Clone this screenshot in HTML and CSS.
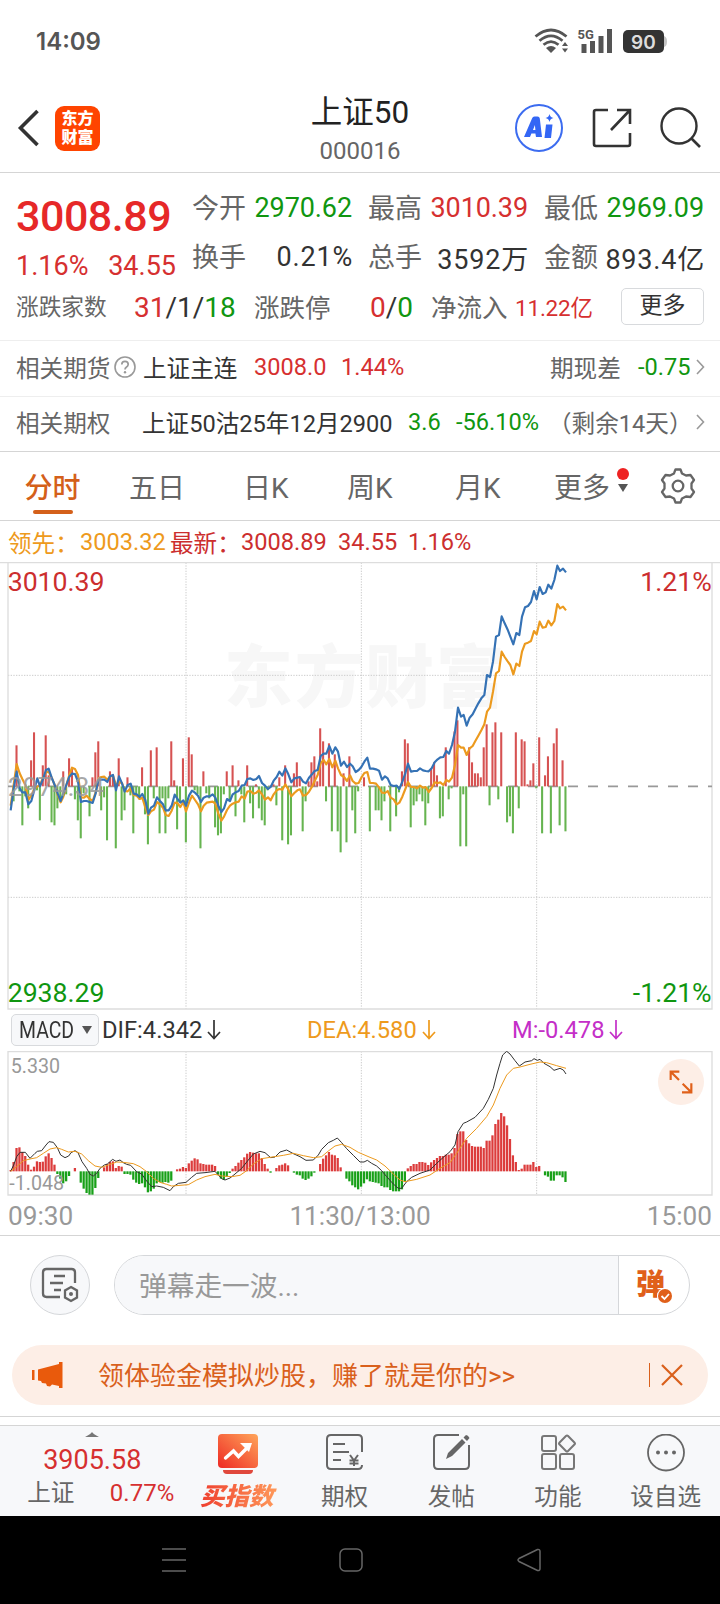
FILE: index.html
```
<!DOCTYPE html>
<html lang="zh-CN">
<head>
    <meta charset="UTF-8">
    <meta name="viewport" content="width=device-width, initial-scale=1.0">
    <title>上证50 000016</title>
    <link rel="stylesheet" href="styles.css">
</head>
<body>
    <div class="status">
        <span class="clock">14:09</span>
        <svg class="status-icons" width="140" height="32" viewBox="0 0 140 32">
            <g fill="none" stroke="#555" stroke-width="2.8">
                <path d="M3.5 12.5Q19 -.5 34.500 12.500"/>
                <path d="M7.500 16.800Q19 7 30.500 16.800"/>
                <path d="M11.500 20.800Q19 14.500 26.500 20.800"/>
            </g>
            <path d="M14 24q5-4 10 0l-5 5z" fill="#555"/>
            <path d="M30 22l3-4 3 4zM30 24.500l3 4 3-4z" fill="#555"/>
            <text x="45.500" y="15" class="net">5G</text>
            <path d="M49.500 20h5v9h-5zM58 17h5v12h-5zM66.500 12h5v17h-5zM75 5h5v24h-5z" fill="#555"/>
            <path d="M131 12q4 0 4 5.500t-4 5.500z" fill="#c4c4c4"/>
            <rect x="91" y="6" width="41" height="23" rx="5" fill="#333"/>
            <text x="99" y="24.500" class="battery">90</text>
        </svg>
    </div>

    <div class="nav">
        <svg class="back" width="24" height="40" viewBox="0 0 24 40"><path d="M22.500 3L5.500 20l17 17" fill="none" stroke="#333" stroke-width="3.600"/></svg>
        <div class="logo">东方<br>财富</div>
        <div class="heading">
            <div class="name">上证50</div>
            <div class="code">000016</div>
        </div>
        <div class="nav-icons">
            <svg width="48" height="48" viewBox="0 0 48 48">
                <circle cx="24" cy="24" r="23" fill="none" stroke="#3c6cf0" stroke-width="2"/>
                <path fill="#3366f5" fill-rule="evenodd" d="M9 33L17 14.500q.700-2 2.500-2h3q2 0 2.300 2L27 33h-6l-.600-3.500h-4L15 33zM18 26h2.400l-.500-5zM31 20.500h6.500l-1.500 13.500h-6.500zM34.500 10q.700 3.500 4 4-3.300.700-4 4-.700-3.300-4-4 3.300-.500 4-4z"/>
            </svg>
            <svg width="40" height="40" viewBox="0 0 40 40"><path d="M16 2H4Q2 2 2 4v32q0 2 2 2h32q2 0 2-2V25M25 2h13v14M38 2L19 22" fill="none" stroke="#333" stroke-width="2.600"/></svg>
            <svg width="42" height="42" viewBox="0 0 42 42"><circle cx="19" cy="19" r="17.500" fill="none" stroke="#333" stroke-width="2.400"/><path d="M31 31l9 9" stroke="#333" stroke-width="2.600"/></svg>
        </div>
    </div>

    <div class="quote">
        <div class="quote-top">
            <div class="price">
                <div class="last">3008.89</div>
                <div class="change"><span>1.16%</span><span>34.55</span></div>
            </div>
            <div class="stats">
                <div class="stat"><span>今开</span><b class="green">2970.62</b></div>
                <div class="stat"><span>最高</span><b class="red">3010.39</b></div>
                <div class="stat"><span>最低</span><b class="green">2969.09</b></div>
                <div class="stat wide"><span>换手</span><b>0.21%</b></div>
                <div class="stat wide"><span>总手</span><b>3592万</b></div>
                <div class="stat wide"><span>金额</span><b>893.4亿</b></div>
            </div>
        </div>
        <div class="breadth">
            <span class="small-label">涨跌家数</span>
            <b><i class="red">31</i>/1/<i class="green">18</i></b>
            <span>涨跌停</span>
            <b><i class="red">0</i>/<i class="green">0</i></b>
            <span>净流入</span>
            <em class="red">11.22亿</em>
            <div class="more">更多</div>
        </div>
    </div>

    <div class="related futures">
        <span>相关期货</span>
        <svg width="24" height="24" viewBox="0 0 24 24"><circle cx="12" cy="12" r="10" fill="none" stroke="#999" stroke-width="1.600"/><path d="M8.800 9.600q0-3.300 3.200-3.300t3.200 3q0 1.700-1.900 2.900-1.300.900-1.300 2.400" fill="none" stroke="#999" stroke-width="1.700"/><circle cx="12" cy="17.300" r="1.200" fill="#999"/></svg>
        <b>上证主连</b>
        <b class="red">3008.0</b>
        <b class="red">1.44%</b>
        <span>期现差</span>
        <b class="green">-0.75</b>
        <svg class="chevron" width="10" height="16" viewBox="0 0 10 16"><path d="M1 1l6.500 7L1 15" fill="none" stroke="#999" stroke-width="1.600"/></svg>
    </div>
    <div class="related options">
        <span>相关期权</span>
        <b>上证50沽25年12月2900</b>
        <b class="green">3.6</b>
        <b class="green">-56.10%</b>
        <span>（剩余14天）</span>
        <svg class="chevron" width="10" height="16" viewBox="0 0 10 16"><path d="M1 1l6.500 7L1 15" fill="none" stroke="#999" stroke-width="1.600"/></svg>
    </div>

    <div class="tabs">
        <span class="active">分时</span>
        <span>五日</span>
        <span>日K</span>
        <span>周K</span>
        <span>月K</span>
        <span>更多</span>
        <svg class="dot" width="12" height="28" viewBox="0 0 12 28"><circle cx="6" cy="6" r="6" fill="#ee2222"/><path d="M1 16h10l-5 8z" fill="#555"/></svg>
        <svg width="36" height="36" viewBox="0 0 36 36"><path d="M14.500 4L15.500 1.500h5L22 5.500l4 2 4.500-.500 3.500 5-2.500 3.500v5L34 24l-3.500 5-4.500-.500-4 2-1.500 4h-5L14 30.500l-4-2-4.500.500L2 24l2.500-3.500v-5L2 12l3.500-5 4.500.500 4-2z" fill="none" stroke="#666" stroke-width="2.300" stroke-linejoin="round"/><circle cx="18" cy="18" r="5.300" fill="none" stroke="#666" stroke-width="2.300"/></svg>
    </div>

    <div class="legend">
        <span class="orange">领先：</span>
        <span class="orange">3003.32</span>
        <span>最新：</span>
        <span>3008.89</span>
        <span>34.55</span>
        <span>1.16%</span>
    </div>

    <svg class="chart" width="720" height="448" viewBox="0 21 2160 1344">
        <text class="watermark" x="672" y="440">东方财富</text>
        <g class="dotted">
            <path d="M24 361H2136M24 1027H2136M558 23V1362M1084 23V1362M1610 23V1362"/>
        </g>
        <path class="frame" d="M0 22.500H2160M24 22.500V1362H2136V22.500"/>
        <path class="zero" d="M24 694H2136"/>
        <g id="volume"></g>
        <polyline class="avg" points="32,752 41,690 50,627 59,655 67,672 76,690 85,735 94,722 103,700 120,690 129,668 138,652 146,650 155,668 164,690 173,720 182,742 190,725 199,690 208,660 216,638 225,642 234,660 243,727 252,728 260,722 269,732 278,738 287,712 295,670 304,666 313,665 322,674 330,664 339,662 348,690 357,682 366,684 374,708 383,709 392,700 401,720 410,722 419,732 427,728 436,758 445,780 453,769 462,764 471,741 480,748 489,758 497,780 506,783 515,767 524,743 532,744 541,756 550,741 558,769 567,743 576,722 585,735 594,748 603,769 611,752 620,743 638,740 646,746 655,776 664,797 672,785 681,765 690,752 698,746 707,742 716,740 725,724 734,731 742,710 751,708 760,716 769,713 777,706 786,718 795,734 804,727 812,736 821,718 830,706 838,702 847,704 856,688 865,703 874,724 883,714 892,706 900,703 909,722 918,720 927,710 936,695 944,678 953,660 962,625 971,615 979,628 988,612 997,637 1006,617 1014,640 1023,660 1032,666 1041,678 1050,661 1058,678 1067,686 1076,684 1084,668 1093,654 1102,651 1110,684 1119,684 1128,686 1137,697 1146,713 1155,714 1163,708 1172,728 1181,733 1190,748 1198,743 1207,725 1216,702 1224,681 1233,696 1242,696 1251,700 1260,692 1269,698 1277,696 1286,711 1295,699 1304,682 1313,684 1321,682 1330,690 1339,675 1347,680 1356,668 1365,630 1374,570 1383,578 1391,578 1400,600 1409,580 1418,573 1426,558 1435,542 1444,526 1453,508 1461,470 1470,458 1479,410 1488,355 1497,348 1505,290 1514,306 1523,319 1531,330 1540,358 1549,326 1558,333 1566,290 1575,266 1584,263 1593,258 1602,228 1610,238 1619,200 1628,218 1637,216 1645,197 1654,211 1663,198 1672,147 1680,160 1689,155 1698,166"/>
        <polyline class="index" points="32,766 41,700 50,650 59,700 67,712 76,712 85,748 94,738 103,705 112,670 120,694 129,672 138,645 146,641 155,668 164,690 173,715 182,738 190,715 199,690 208,665 216,656 225,657 234,680 243,741 252,738 260,738 269,741 278,744 287,715 295,676 304,674 313,674 322,681 330,664 339,660 348,706 357,664 366,685 374,710 383,690 392,686 401,716 410,718 419,726 427,717 436,735 445,776 453,758 462,752 471,727 480,738 489,748 497,766 506,766 515,752 524,719 532,731 541,743 550,736 558,752 567,722 576,707 585,713 594,722 603,741 611,728 620,724 629,724 638,718 646,728 655,752 664,771 672,760 681,732 690,738 698,718 707,712 716,708 725,692 734,690 742,672 751,670 760,675 769,672 777,663 786,684 795,692 804,702 812,696 821,677 830,666 838,650 847,662 856,640 865,658 874,682 883,670 892,668 900,666 909,680 918,685 927,668 936,658 944,648 953,645 962,603 971,596 979,596 988,573 997,596 1006,577 1014,590 1023,632 1032,620 1041,636 1050,626 1058,634 1067,651 1076,645 1084,636 1093,620 1102,608 1110,641 1119,641 1128,643 1137,647 1146,674 1155,664 1163,670 1172,690 1181,693 1190,692 1198,702 1207,680 1216,655 1224,626 1233,650 1242,648 1251,648 1260,640 1269,646 1277,648 1286,649 1295,640 1304,622 1313,613 1321,607 1330,606 1339,588 1347,596 1356,570 1365,530 1374,458 1383,485 1391,480 1400,512 1409,488 1418,478 1426,462 1435,445 1444,430 1453,420 1461,360 1470,366 1479,320 1488,245 1497,240 1505,184 1514,205 1523,224 1531,245 1540,268 1549,234 1558,240 1566,185 1575,157 1584,153 1593,141 1602,108 1610,133 1619,96 1628,117 1637,112 1645,89 1654,101 1663,75 1672,32 1680,48 1689,41 1698,52"/>
        <text class="base" x="23" y="722">2974.34</text>
        <text class="axis up" x="23" y="107">3010.39</text>
        <text class="axis up end" x="2135" y="107">1.21%</text>
        <text class="axis down" x="23" y="1341">2938.29</text>
        <text class="axis down end" x="2135" y="1341">-1.21%</text>
    </svg>

    <div class="macd-head">
        <div class="macd-button"><span>MACD</span><svg width="10" height="8" viewBox="0 0 10 8"><path d="M0 0h10L5 8z" fill="#555"/></svg></div>
        <div class="dif">DIF:4.342<svg width="14" height="20" viewBox="0 0 14 20"><path d="M7 0v18M1 12l6 6.500 6-6.500" fill="none" stroke="currentColor" stroke-width="1.700"/></svg></div>
        <div class="dea">DEA:4.580<svg width="14" height="20" viewBox="0 0 14 20"><path d="M7 0v18M1 12l6 6.500 6-6.500" fill="none" stroke="currentColor" stroke-width="1.700"/></svg></div>
        <div class="m">M:-0.478<svg width="14" height="20" viewBox="0 0 14 20"><path d="M7 0v18M1 12l6 6.500 6-6.500" fill="none" stroke="currentColor" stroke-width="1.700"/></svg></div>
    </div>

    <svg class="chart" width="720" height="145" viewBox="0 213 2160 435">
        <g class="dotted"><path d="M558 214V645M1084 214V645M1610 214V645"/></g>
        <path class="frame" d="M24 214.500H2136V645H24z"/>
        <g id="macd"></g>
        <text class="scale" x="32" y="279">5.330</text>
        <text class="scale" x="28" y="630">-1.048</text>
        <polyline class="dif-line" points="32,574 41,555 50,530 60,517 76,517 90,535 105,520 112,514 125,512 138,495 147,485 160,487 172,503 182,525 195,533 206,528 213,518 225,512 234,518 246,545 260,565 270,583 280,588 290,580 300,565 313,555 322,552 338,538 348,544 360,540 370,548 380,553 392,556 410,575 425,582 440,603 455,620 470,618 490,622 510,632 520,620 535,610 558,607 575,592 590,580 615,578 645,574 665,596 675,600 690,594 705,582 725,565 745,540 760,522 780,514 795,518 812,533 825,531 840,516 860,510 880,521 900,530 918,541 940,540 955,525 965,508 985,488 1000,481 1012,474 1025,488 1040,506 1060,526 1080,546 1092,546 1102,541 1115,550 1130,558 1145,572 1160,590 1180,612 1195,625 1205,625 1220,605 1235,592 1260,580 1290,570 1310,550 1330,532 1350,515 1365,495 1374,455 1390,430 1400,426 1425,412 1450,385 1465,358 1480,325 1490,285 1500,250 1508,225 1520,214 1530,222 1545,242 1558,258 1575,246 1595,242 1602,236 1612,241 1620,238 1632,250 1650,260 1662,271 1680,265 1690,270 1698,282"/>
        <polyline class="dea-line" points="32,574 50,560 70,542 90,537 110,533 130,520 150,507 170,503 185,508 205,516 225,514 245,522 265,542 285,558 305,562 325,555 350,546 370,547 400,551 420,560 440,575 460,595 480,607 500,613 515,618 540,616 565,614 590,600 615,590 645,583 665,588 695,590 720,586 740,572 760,552 785,536 810,532 850,526 880,520 910,527 940,533 965,530 985,513 1005,498 1025,493 1050,502 1075,517 1110,532 1130,540 1155,558 1180,582 1200,600 1215,605 1250,598 1290,585 1320,565 1350,548 1370,520 1385,497 1400,475 1430,445 1460,410 1480,375 1500,325 1520,285 1540,265 1560,261 1590,253 1620,246 1640,248 1670,257 1698,265"/>
        <circle cx="2043" cy="306" r="69" fill="#fdeee6"/>
        <path d="M2012 300V275H2038M2013 276L2037 300M2074 310V337H2046M2073 336L2048 311" fill="none" stroke="#e0601a" stroke-width="6.500"/>
    </svg>

    <div class="times"><span>09:30</span><span>11:30/13:00</span><span>15:00</span></div>

    <div class="comment">
        <div class="comment-set">
            <svg width="38" height="36" viewBox="0 0 38 36"><g fill="none" stroke="#666" stroke-width="2.300"><path d="M34 16V5.500Q34 2 30.500 2H5.500Q2 2 2 5.500v21Q2 30 5.500 30H19M13 9h11M9 16h13M13 23h7"/><path d="M30 20l6 3.500v7L30 34l-6-3.500v-7z"/></g><circle cx="30" cy="27" r="2" fill="#666"/></svg>
        </div>
        <div class="comment-box">
            <div class="comment-input">弹幕走一波...</div>
            <div class="comment-send">弹<svg width="16" height="16" viewBox="0 0 16 16"><circle cx="8" cy="8" r="8" fill="#fff"/><circle cx="8" cy="8" r="7" fill="#e0601a"/><path d="M4.500 8l3 3 4.500-5" fill="none" stroke="#fff" stroke-width="1.800"/></svg></div>
        </div>
    </div>

    <div class="banner">
        <svg class="horn" width="32" height="28" viewBox="0 0 32 28"><path d="M0 9h2.500v10H0zM6 8.500L27 3V1h3.500v26H27v-2l-7-1.500-2 2-3-.500-1-2.500-4-.500-1-2-3-.500z" fill="#e95a0c"/></svg>
        <span class="banner-text">领体验金模拟炒股，赚了就是你的&gt;&gt;</span>
        <span class="bar"></span>
        <svg width="22" height="22" viewBox="0 0 22 22"><path d="M1 1l20 20M21 1L1 21" stroke="#d9601c" stroke-width="2.200"/></svg>
    </div>

    <div class="bottom">
        <div class="market">
            <svg width="14" height="5" viewBox="0 0 14 5"><path d="M0 5q6-3 7-5 1 2 7 5z" fill="#777"/></svg>
            <div class="market-value">3905.58</div>
            <div class="market-row"><span>上证</span><b>0.77%</b></div>
        </div>
        <div class="item">
            <svg width="40" height="40" viewBox="0 0 40 40">
                <defs><linearGradient id="buy" x1="0" y1="1" x2="1" y2="0"><stop offset="0" stop-color="#ee2a24"/><stop offset="1" stop-color="#ffa55a"/></linearGradient></defs>
                <rect width="40" height="34" rx="4" fill="url(#buy)"/>
                <path d="M7.500 24l8-7 5 5.500 9-9" fill="none" stroke="#fff" stroke-width="3.400" stroke-linecap="round"/>
                <path d="M22 9h12l-3 9z" fill="#fff"/>
                <path d="M5 36h30q0 4-4 4H9q-4 0-4-4z" fill="#e0483c"/>
            </svg>
            <span class="buy">买指数</span>
        </div>
        <div class="item">
            <svg width="40" height="40" viewBox="0 0 40 40"><path d="M37 18V5q0-4-4-4H6Q2 1 2 5v26q0 4 4 4h27q4 0 4-4" fill="none" stroke="#666" stroke-width="2"/><path d="M8 10h12M8 18h16M8 26h8M25 21l4 5.500 4-5.500M24.500 26.500h9M24.500 29.500h9M29 26v6" fill="none" stroke="#666" stroke-width="2"/></svg>
            <span>期权</span>
        </div>
        <div class="item">
            <svg width="40" height="40" viewBox="0 0 40 40"><path d="M28 1H7Q3 1 3 5v26q0 4 4 4h27q4 0 4-4V11" fill="none" stroke="#666" stroke-width="2"/><path d="M15 25l2-6L31 5l3.500 3.500L21 22zM32.500 3.500L35 1q2 0 3.500 3L36 7z" fill="#666"/></svg>
            <span>发帖</span>
        </div>
        <div class="item">
            <svg width="40" height="40" viewBox="0 0 40 40"><g fill="none" stroke="#777" stroke-width="2"><rect x="4" y="2" width="14" height="15" rx="2"/><rect x="4" y="20" width="14" height="15" rx="2"/><rect x="22" y="20" width="14" height="15" rx="2"/><rect x="23" y="3.500" width="12" height="12" rx="1.500" transform="rotate(45 29 9.500)"/></g></svg>
            <span>功能</span>
        </div>
        <div class="item">
            <svg width="40" height="40" viewBox="0 0 40 40"><circle cx="20" cy="18.500" r="18" fill="none" stroke="#666" stroke-width="1.800"/><g fill="#666"><circle cx="12" cy="18.500" r="2"/><circle cx="20" cy="18.500" r="2"/><circle cx="28" cy="18.500" r="2"/></g></svg>
            <span>设自选</span>
        </div>
    </div>

    <div class="system">
        <svg width="24" height="24" viewBox="0 0 24 24"><path d="M0 1h24M0 12h24M0 23h24" stroke="#666" stroke-width="1.700"/></svg>
        <svg width="24" height="24" viewBox="0 0 24 24"><rect x="1" y="1" width="22" height="22" rx="5" fill="none" stroke="#666" stroke-width="1.500"/></svg>
        <svg width="24" height="24" viewBox="0 0 24 24"><path d="M20.500 1.500L2 10.500q-2 1.500 0 3l18.500 9q2.500.500 2.500-2v-17q0-2.500-2.500-2z" fill="none" stroke="#666" stroke-width="1.500"/></svg>
    </div>
    <script src="chart.js"></script>
</body>
</html>
```

FILE: styles.css
```
* {
    box-sizing: border-box;
}
body {
    margin: 0;
    width: 720px;
    font-family: Roboto, "Noto Sans CJK SC", sans-serif;
    background: white;
    color: #333;
    white-space: nowrap;
}
b, i, em {
    font-weight: normal;
    font-style: normal;
}
svg {
    display: block;
    flex: none;
}
.red {
    color: #d63030;
}
.green {
    color: #109610;
}
.status {
    height: 82px;
    display: flex;
    justify-content: space-between;
    padding: 24px 48px 0 36px;
}
.clock {
    font-family: Inter, sans-serif;
    font-size: 24px;
    line-height: 35px;
    font-weight: 600;
    color: #555;
}
.net {
    font: bold 13px Roboto, sans-serif;
    fill: #555;
}
.battery {
    font: 600 19px Inter, sans-serif;
    fill: #ddd;
}
.nav {
    height: 91px;
    display: grid;
    grid-template-columns: 40px 60px 520px 1fr;
    align-items: center;
    padding: 2px 0 0 15px;
    border-bottom: 1px solid #d5d5d5;
}
.logo {
    width: 45px;
    height: 45px;
    border-radius: 9px;
    background: #ff4400;
    color: white;
    font-size: 16px;
    font-weight: 900;
    line-height: 19px;
    padding-top: 3px;
    text-align: center;
}
.heading {
    width: 200px;
    margin-left: 145px;
    padding-top: 5px;
    text-align: center;
}
.name {
    font-size: 31.500px;
    line-height: 40px;
    color: #222;
}
.code {
    font-size: 24px;
    line-height: 36px;
    color: #666;
}
.nav-icons {
    display: flex;
    align-items: center;
    gap: 28.500px;
    margin-left: -120px;
}
.quote {
    height: 168px;
    border-bottom: 1px solid #eee;
}
.quote-top {
    display: flex;
    padding: 10px 16px 0;
    height: 110px;
}
.price {
    width: 176px;
}
.last {
    font-size: 43px;
    line-height: 50px;
    font-weight: 500;
    letter-spacing: -0.5px;
    color: #e62828;
    margin-top: 8px;
}
.change {
    display: flex;
    justify-content: space-between;
    width: 160px;
    font-size: 27px;
    line-height: 32px;
    color: #d63030;
    margin-top: 9px;
}
.stats {
    display: grid;
    grid-template-columns: repeat(3, 160px);
    grid-auto-rows: 50px;
    column-gap: 16px;
}
.stat {
    display: flex;
    justify-content: space-between;
    align-items: center;
    font-size: 27px;
}
.stat span {
    padding-bottom: 3px;
}
.stat b {
    letter-spacing: -0.1px;
}
.wide {
    padding-bottom: 2px;
}
.wide b {
    letter-spacing: 0.8px;
    margin-right: -1px;
}
.stat span, .breadth span {
    color: #666;
}
.breadth {
    display: grid;
    grid-template-columns: 118px 120px 116px 61px 84px 106px 83px;
    align-items: center;
    padding-left: 16px;
    height: 46px;
    font-size: 27px;
}
.breadth b {
    font-size: 28px;
    padding-top: 2px;
}
.breadth span {
    font-size: 25.500px;
    padding-bottom: 2px;
}
.breadth .small-label {
    font-size: 22.700px;
}
.breadth em {
    font-size: 22.500px;
    letter-spacing: -0.2px;
}
.more {
    height: 37px;
    border: 1px solid #d8dadd;
    border-radius: 5px;
    text-align: center;
    font-size: 23px;
    line-height: 34px;
}
.related {
    display: grid;
    align-items: center;
    padding: 0 0 4px 16px;
    font-size: 23.600px;
}
.related span {
    color: #666;
}
.futures {
    height: 56px;
    grid-template-columns: 97px 30px 111px 87px 209px 88px 58px 10px;
    border-bottom: 1px solid #eee;
}
.options {
    height: 55px;
    grid-template-columns: 126px 266px 48px 92px 148px 10px;
    border-bottom: 1px solid #d5d5d5;
}
.tabs {
    height: 69px;
    display: grid;
    grid-template-columns: 105px 114px 104px 108px 99px 63px 43px 36px;
    align-items: center;
    padding-left: 24px;
    font-size: 28px;
    color: #666;
    border-bottom: 1px solid #d5d5d5;
}
.tabs .dot {
    margin-bottom: 8px;
}
.active {
    color: #d4601a;
    font-weight: 500;
    width: 57px;
    display: flex;
    flex-direction: column;
    align-items: center;
}
.active::after {
    content: "";
    width: 40px;
    height: 4px;
    border-radius: 2px;
    background: #d4601a;
    margin: 4px 0 -8px;
}
.legend {
    height: 41px;
    display: grid;
    grid-template-columns: 72px 90px 71px 97px 70px 70px;
    align-items: center;
    padding-left: 8px;
    font-size: 23.600px;
    color: #cc2e2e;
}
.legend .orange {
    color: #ee9a1c;
}
.frame {
    fill: none;
    stroke: #ddd;
    stroke-width: 4;
}
.dotted {
    fill: none;
    stroke: #ccc;
    stroke-width: 3;
    stroke-dasharray: 4 4;
}
.zero {
    stroke: #999;
    stroke-width: 5;
    stroke-dasharray: 30 30;
}
.watermark {
    font-size: 206px;
    font-weight: 900;
    letter-spacing: 6px;
    fill: #f7f7f7;
}
.axis, .base {
    font-size: 80px;
}
.base {
    fill: #999;
    fill-opacity: 0.85;
}
.up {
    fill: #cc2e2e;
}
.down {
    fill: #109610;
}
.end {
    text-anchor: end;
}
.index, .avg, .dif-line, .dea-line {
    fill: none;
    stroke: #3572b5;
    stroke-width: 6.500;
    stroke-linejoin: round;
}
.avg {
    stroke: #ec9a1e;
}
.dif-line {
    stroke: #333;
    stroke-width: 3;
}
.dea-line {
    stroke: #ec9a1e;
    stroke-width: 3;
}
.scale {
    font-size: 59px;
    fill: #999;
}
.macd-head {
    height: 41px;
    display: grid;
    grid-template-columns: 91px 205px 205px 1fr;
    align-items: center;
    padding: 0 0 2px 11px;
    font-size: 23.700px;
}
.macd-head > div {
    display: flex;
    align-items: center;
}
.macd-head > div svg {
    margin-left: 5px;
}
.macd-head .macd-button {
    width: 88px;
    height: 32px;
    background: #f7f8fa;
    border: 1px solid #d8dadd;
    border-radius: 5px;
    padding-left: 7px;
}
.macd-button span {
    width: 58px;
    transform: scaleX(0.82);
    transform-origin: left;
}
.dea {
    color: #ee9a1c;
}
.m {
    color: #c42fc8;
}
.times {
    height: 40px;
    display: flex;
    justify-content: space-between;
    align-items: center;
    padding: 0 8px;
    font-size: 26.200px;
    color: #999;
    border-bottom: 1px solid #d5d5d5;
}
.comment {
    display: flex;
    gap: 24px;
    padding: 19px 30px 0;
    height: 109px;
}
.comment-set {
    width: 60px;
    height: 60px;
    border: 1px solid #d5d7da;
    border-radius: 50%;
    background: #f7f8fa;
    display: flex;
    align-items: center;
    justify-content: center;
}
.comment-box {
    width: 576px;
    height: 60px;
    display: flex;
    border: 1px solid #d5d7da;
    border-radius: 30px;
    overflow: hidden;
}
.comment-input {
    width: 504px;
    padding: 2px 0 0 24px;
    background: #f7f8fa;
    border-right: 1px solid #d5d7da;
    color: #999;
    font-size: 27.700px;
    line-height: 58px;
}
.comment-send {
    position: relative;
    padding: 1px 0 0 17px;
    color: #e0601a;
    font-size: 29px;
    font-weight: 900;
    line-height: 56px;
}
.comment-send svg {
    position: absolute;
    left: 38px;
    top: 32px;
}
.banner {
    width: 696px;
    height: 60px;
    margin: 0 12px 11px;
    border-radius: 30px;
    background: #fdeee6;
    display: flex;
    align-items: center;
    padding-left: 20px;
    color: #d9601c;
    font-size: 26px;
}
.banner-text {
    width: 551px;
    margin-left: 34px;
    padding-bottom: 4px;
}
.bar {
    width: 1px;
    height: 24px;
    background: #d9601c;
    margin-right: 11px;
}
.bottom {
    height: 100px;
    border-top: 1px solid #d5d5d5;
    padding-top: 8px;
    background: white;
    display: flex;
    color: #666;
    font-size: 23.600px;
}
.market, .item {
    height: 91px;
    background: #f7f8fa;
    border-top: 1px solid #d5d5d5;
    display: flex;
    flex-direction: column;
    align-items: center;
    width: 107px;
}
.market {
    width: 185px;
    padding-top: 6px;
}
.market-value {
    font-size: 27px;
    line-height: 32px;
    margin-top: 7px;
    color: #d63030;
}
.market-row {
    display: flex;
    justify-content: space-between;
    width: 147px;
    line-height: 34px;
    margin-left: 17px;
}
.market-row b {
    color: #d63030;
    font-size: 24px;
}
.item {
    padding-top: 8px;
}
.item span {
    line-height: 30px;
    margin-top: 8px;
}
.item:last-child {
    width: 109px;
}
.item .buy {
    font-size: 24.500px;
    font-weight: 900;
    font-style: italic;
    background: linear-gradient(90deg, #ee3a2c, #ff9a5a);
    -webkit-background-clip: text;
    color: transparent;
    padding: 0 4px;
    margin-left: -2px;
}
.system {
    height: 88px;
    background: black;
    display: flex;
    align-items: center;
    justify-content: center;
    gap: 153.500px;
    padding-right: 18px;
}
```

FILE: chart.js
```
const STEP = 8.76;
const LEFT = 32;

// [minute, height], positive bars go up
const volume = [
    [1,-15],[2,41],[3,-5],[4,-39],[5,-10],[6,-22],[7,26],[8,54],[9,-4],[10,-34],[11,21],[12,51],[13,11],[14,-36],[15,-39],[16,-22],[17,-15],[18,15],[19,-8],[20,28],[21,18],[22,-13],[23,-34],[24,-52],[25,-7],[27,-30],[28,9],[29,34],[30,45],[31,-24],[32,-11],[33,-54],[34,15],[35,11],[36,-62],[37,28],[38,-34],[39,-24],
    [40,9],[41,-9],[42,-47],[43,-9],[44,-13],[45,19],[46,-28],[47,-58],[48,36],[49,-12],[50,39],[51,-47],[52,-12],[53,-47],[54,-12],[55,45],[56,6],[57,-43],[58,-15],[59,28],[60,-56],[61,49],[62,32],[63,-4],[64,-8],[65,-62],[66,15],[67,-7],[68,-12],[70,-41],[71,-49],[72,-47],[73,-8],[74,15],[75,-15],[76,21],[77,-30],[78,6],[79,-8],
    [80,-36],[81,21],[82,-17],[83,-32],[84,2],[85,-22],[86,-34],[87,-39],[88,-4],[90,2],[91,-19],[92,9],[93,-54],[94,21],[95,-58],[96,-49],[97,13],[98,24],[99,9],[100,-45],[101,-15],[102,5],[103,24],[104,30],[105,5],[106,58],[107,45],[108,-15],[109,43],[110,-45],[111,32],[112,-45],[113,-66],[114,13],[115,-56],[116,30],[117,-24],[118,-47],[119,-5],
    [121,9],[123,-45],[125,-24],[126,-24],[127,-34],[128,-15],[130,-45],[132,-30],[133,-6],[134,15],[135,47],[136,43],[137,-41],[138,-19],[139,-15],[140,-8],[141,-15],[142,-39],[143,-17],[144,18],[145,24],[146,11],[147,-32],[148,-30],[149,39],[150,-13],[151,-2],[152,55],[153,66],[154,-60],[155,-8],[156,-60],[157,39],[158,24],[159,13],
    [160,13],[161,9],[162,39],[163,62],[164,-19],[165,54],[166,64],[167,-13],[168,54],[170,-36],[171,-30],[172,-47],[173,54],[174,-22],[175,47],[176,45],[177,2],[178,6],[179,23],[180,-2],[181,49],[182,-47],[183,11],[184,30],[185,-47],[186,43],[187,58],[188,-39],[189,26],[190,-45]
];

const macd = [
    4,28,70,72,58,46,20,5,14,30,28,29,45,54,40,20,-8,-22,-36,-30,-14,0,10,0,-34,-52,-65,-70,-70,-50,-20,0,12,22,28,30,10,16,14,-8,
    -8,-10,-25,-34,-38,-36,-48,-63,-60,-52,-36,-32,-34,-32,-34,-28,0,6,8,13,10,24,32,39,36,24,22,20,20,20,16,-10,-22,-25,-16,-5,8,16,26,34,
    42,53,58,56,54,54,40,22,8,-4,0,10,18,20,24,18,0,-4,-10,-12,-22,-26,-22,-15,-4,0,22,38,48,58,50,48,40,12,0,-22,-30,-42,-48,-54,
    -46,-36,-24,-30,-32,-34,-36,-44,-48,-48,-56,-60,-60,-60,-54,-30,9,16,22,22,28,28,26,19,27,34,40,46,46,50,50,54,70,112,120,120,94,84,76,74,
    74,74,70,92,92,108,142,155,175,165,138,97,48,28,4,8,20,20,20,28,13,16,0,-12,-16,-28,-28,-12,-12,-18,-32
];

function addBar(group, minute, height, zero, width, up, down) {
    const bar = document.createElementNS("http://www.w3.org/2000/svg", "rect");
    bar.setAttribute("x", LEFT + minute * STEP - width / 2);
    bar.setAttribute("y", height > 0 ? zero - height : zero);
    bar.setAttribute("width", width);
    bar.setAttribute("height", Math.abs(height));
    bar.setAttribute("fill", height > 0 ? up : down);
    group.appendChild(bar);
}

const volumeGroup = document.getElementById("volume");
volume.forEach(([minute, height]) => addBar(volumeGroup, minute, height * 3, 694, 6.2, "#d65252", "#66b450"));

const macdGroup = document.getElementById("macd");
macd.forEach((height, minute) => addBar(macdGroup, minute, height, 574, 6.8, "#dc3c3c", "#18a018"));
```
